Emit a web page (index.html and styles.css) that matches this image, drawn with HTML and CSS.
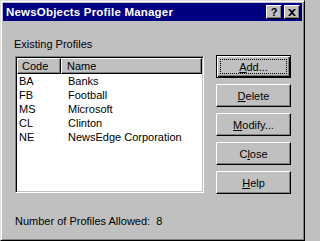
FILE: index.html
```html
<!DOCTYPE html>
<html>
<head>
<meta charset="utf-8">
<link rel="stylesheet" href="styles.css">
</head>
<body>
<div class="window">
  <div class="titlebar">
    <span class="title">NewsObjects Profile Manager</span>
    <div class="tbtns">
      <span class="tbtn">?</span>
      <span class="tbtn close-x">
        <svg width="8" height="7" viewBox="0 0 8 7"><path d="M0 0h2l2 2 2-2h2L5 3.5 8 7H6L4 5 2 7H0l3-3.5z" fill="#000"/></svg>
      </span>
    </div>
  </div>
  <div class="content">
    <div class="main">
      <div class="leftcol">
        <div class="label">Existing Profiles</div>
        <div class="list">
          <div class="header">
            <div class="hcell code">Code</div>
            <div class="hcell name">Name</div>
          </div>
          <div class="row"><span class="c">BA</span><span class="n">Banks</span></div>
          <div class="row"><span class="c">FB</span><span class="n">Football</span></div>
          <div class="row"><span class="c">MS</span><span class="n">Microsoft</span></div>
          <div class="row"><span class="c">CL</span><span class="n">Clinton</span></div>
          <div class="row"><span class="c">NE</span><span class="n">NewsEdge Corporation</span></div>
        </div>
      </div>
      <div class="buttons">
        <div class="btn default"><span class="focus"><u>A</u>dd...</span></div>
        <div class="btn"><span><u>D</u>elete</span></div>
        <div class="btn"><span><u>M</u>odify...</span></div>
        <div class="btn"><span>C<u>l</u>ose</span></div>
        <div class="btn"><span><u>H</u>elp</span></div>
      </div>
    </div>
    <div class="footer">Number of Profiles Allowed:&nbsp;&nbsp;8</div>
  </div>
</div>
</body>
</html>
```

FILE: styles.css
```css
html, body {
  margin: 0;
  padding: 0;
  background: #c0c0c0;
}
body {
  font-family: "Liberation Sans", Arial, sans-serif;
  font-size: 11px;
  color: #000;
}
.window {
  box-sizing: border-box;
  width: 305px;
  height: 241px;
  background: #c0c0c0;
  border-top: 1px solid #dfdfdf;
  border-left: 1px solid #dfdfdf;
  border-right: 1px solid #000;
  border-bottom: 1px solid #000;
  box-shadow: inset 1px 1px 0 #fff, inset -1px -1px 0 #808080;
  padding: 2px;
  display: flex;
  flex-direction: column;
}
.titlebar {
  height: 18px;
  background: #000080;
  color: #fff;
  display: flex;
  align-items: center;
  justify-content: space-between;
  padding: 0 2px 0 3px;
}
.title {
  font-weight: bold;
  font-size: 11.5px;
  letter-spacing: 0.2px;
}
.tbtns {
  display: flex;
  gap: 2px;
}
.tbtn {
  box-sizing: border-box;
  width: 16px;
  height: 14px;
  background: #c0c0c0;
  color: #000;
  border-top: 1px solid #fff;
  border-left: 1px solid #fff;
  border-right: 1px solid #000;
  border-bottom: 1px solid #000;
  box-shadow: inset -1px -1px 0 #808080;
  display: flex;
  align-items: center;
  justify-content: center;
  font-weight: bold;
  font-size: 11px;
  line-height: 1;
}
.content {
  flex: 1;
  display: flex;
  flex-direction: column;
  padding: 0 0 0 11px;
}
.main {
  display: flex;
  gap: 12px;
}
.leftcol {
  display: flex;
  flex-direction: column;
  padding-top: 17px;
}
.label {
  height: 13px;
  line-height: 13px;
  margin-left: 0;
}
.list {
  box-sizing: border-box;
  margin-top: 5px;
  margin-left: 1px;
  width: 189px;
  height: 137px;
  background: #fff;
  border-top: 1px solid #808080;
  border-left: 1px solid #808080;
  border-right: 1px solid #fff;
  border-bottom: 1px solid #fff;
  box-shadow: inset 1px 1px 0 #000, inset -1px -1px 0 #c0c0c0;
  padding: 1px;
}
.header {
  display: flex;
  height: 16px;
}
.hcell {
  box-sizing: border-box;
  height: 16px;
  line-height: 14px;
  background: #c0c0c0;
  border-top: 1px solid #fff;
  border-left: 1px solid #fff;
  border-right: 1px solid #000;
  border-bottom: 1px solid #000;
  box-shadow: inset -1px -1px 0 #808080;
  padding-left: 4px;
}
.hcell.code {
  width: 44px;
}
.hcell.name {
  flex: 1;
  padding-left: 5px;
}
.row {
  display: flex;
  height: 14px;
  line-height: 14px;
}
.row .c {
  width: 49px;
  padding-left: 2px;
}
.row .n {
  flex: 1;
}
.buttons {
  display: flex;
  flex-direction: column;
  gap: 6px;
  padding-top: 34px;
}
.btn {
  box-sizing: border-box;
  width: 75px;
  height: 23px;
  background: #c0c0c0;
  border-top: 1px solid #fff;
  border-left: 1px solid #fff;
  border-right: 1px solid #000;
  border-bottom: 1px solid #000;
  box-shadow: inset -1px -1px 0 #808080;
  display: flex;
  align-items: center;
  justify-content: center;
}
.btn.default {
  border: 1px solid #000;
  box-shadow: inset 1px 1px 0 #fff, inset -1px -1px 0 #000, inset -2px -2px 0 #808080;
  padding: 3px;
}
.btn .focus {
  box-sizing: border-box;
  width: 100%;
  height: 100%;
  border: 1px dotted #000;
  display: flex;
  align-items: center;
  justify-content: center;
}
.footer {
  margin-top: 21px;
  margin-left: 1px;
  height: 13px;
  line-height: 13px;
}
```
